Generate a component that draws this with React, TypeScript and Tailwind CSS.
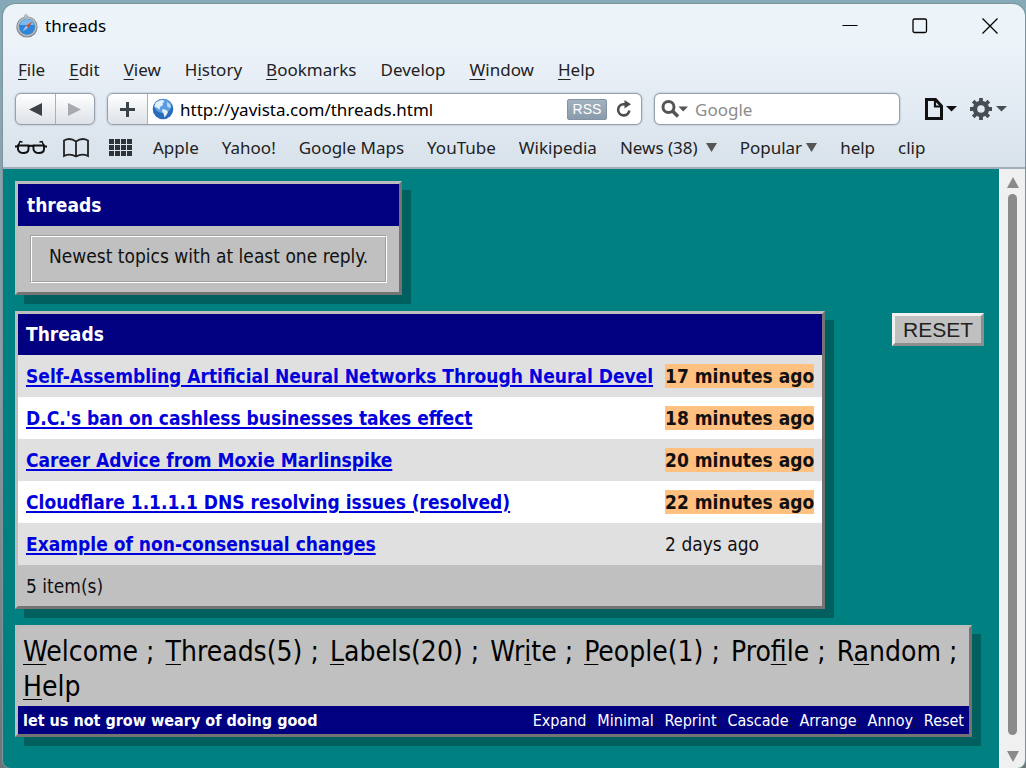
import React from "react";

type Parts = [string, string, string];

const menus: Parts[] = [
  ["", "F", "ile"],
  ["", "E", "dit"],
  ["", "V", "iew"],
  ["H", "i", "story"],
  ["", "B", "ookmarks"],
  ["Develop", "", ""],
  ["", "W", "indow"],
  ["", "H", "elp"],
];

const bookmarks = ["Apple", "Yahoo!", "Google Maps", "YouTube", "Wikipedia"];

const topics = [
  { title: "Self-Assembling Artificial Neural Networks Through Neural Devel", age: "17 minutes ago", fresh: true },
  { title: "D.C.'s ban on cashless businesses takes effect", age: "18 minutes ago", fresh: true },
  { title: "Career Advice from Moxie Marlinspike", age: "20 minutes ago", fresh: true },
  { title: "Cloudflare 1.1.1.1 DNS resolving issues (resolved)", age: "22 minutes ago", fresh: true },
  { title: "Example of non-consensual changes", age: "2 days ago", fresh: false },
];

const links: Parts[] = [
  ["", "W", "elcome"],
  ["", "T", "hreads(5)"],
  ["", "L", "abels(20)"],
  ["Wr", "i", "te"],
  ["", "P", "eople(1)"],
  ["Pro", "f", "ile"],
  ["R", "a", "ndom"],
  ["", "H", "elp"],
];

const actions = ["Expand", "Minimal", "Reprint", "Cascade", "Arrange", "Annoy", "Reset"];

function CompassIcon() {
  return (
    <svg width="24" height="24" viewBox="0 0 24 24" aria-hidden="true">
      <circle cx="11" cy="2.2" r="1.5" fill="none" stroke="#9a9fa3" />
      <circle cx="12" cy="13" r="10.6" fill="#7d8286" />
      <circle cx="12" cy="12.6" r="9.8" fill="#b4babe" />
      <circle cx="12" cy="12.8" r="8" fill="#2f86d6" />
      <path d="M5 11a7 6 0 0 1 14 0z" fill="#7db8ea" />
      <path d="M17.500 7.500l-4.500 6.300-2-2z" fill="#e2442c" />
      <path d="M7.500 17.500l3.500-5.700 2 2z" fill="#a9c9e6" />
    </svg>
  );
}

function GlobeIcon() {
  return (
    <svg width="22" height="22" viewBox="0 0 22 22" aria-hidden="true">
      <circle cx="11" cy="11" r="10.3" fill="#2a6cba" />
      <ellipse cx="11" cy="8" rx="8.500" ry="7" fill="#5b9de0" />
      <path d="M3 6c2-3 5-4 8-4l1.500 2-2 1 .5 2-3 2-.5 3-2-2-3-1z" fill="#e2f0fc" />
      <path d="M10.500 11l4 1 1.500 2-1.500 3-2 2.500-1-4-1.500-2z" fill="#e2f0fc" />
      <path d="M15 4l3 2 1 3-2 1-2-2z" fill="#b9d8f6" />
    </svg>
  );
}

function DownIcon() {
  return (
    <svg width="11" height="9" viewBox="0 0 11 9" aria-hidden="true">
      <path d="M0 0h11L5.500 9z" fill="#555" />
    </svg>
  );
}

function GlassesIcon() {
  return (
    <svg width="32" height="15" viewBox="0 0 32 15" fill="none" stroke="#111" aria-hidden="true">
      <path d="M0 6.500h3M29 6.500h3M13 6.500q3-1.500 6 0" strokeWidth="2" />
      <path d="M3 6L5 1.500l2.500.5M29 6l-2-4.500-2.500.5" strokeWidth="1.500" />
      <path d="M3 5.500h10.500v4q-.5 3.500-5 3.500T3 9.500zM18.500 5.500H29v4q-.5 3.500-5 3.500t-5.500-3.500z" strokeWidth="1.900" />
    </svg>
  );
}

function BookIcon() {
  return (
    <svg width="28" height="20" viewBox="0 0 28 20" fill="none" stroke="#222" strokeWidth="1.800" aria-hidden="true">
      <path d="M14 3.500Q8 -1 2 2.500V18q6-3 12 .5 6-3.500 12-.5V2.500Q20 -1 14 3.500zV18" />
    </svg>
  );
}

function GridIcon() {
  return (
    <svg width="23" height="17" viewBox="0 0 23 17" fill="#2e3338" aria-hidden="true">
      {[0, 6, 12].map((y) => [0, 6, 12, 18].map((x) => <rect key={`${x}-${y}`} x={x} y={y} width="5" height="5" />))}
    </svg>
  );
}

function Hot({ parts }: { parts: Parts }) {
  return (
    <>
      {parts[0]}
      {parts[1] && <span className="underline decoration-1 underline-offset-3">{parts[1]}</span>}
      {parts[2]}
    </>
  );
}

function TitleBar() {
  return (
    <header className="flex h-11 items-center bg-[#ecf4fa] pl-3">
      <CompassIcon />
      <h1 className="ml-1.5 text-[17px] text-black">threads</h1>
      <div className="ml-auto flex h-full text-black">
        <button aria-label="Minimize" className="grid w-[70px] place-items-center">
          <svg width="16" height="16" viewBox="0 0 16 16" fill="none" stroke="currentColor"><path d="M.5 7.500h15" /></svg>
        </button>
        <button aria-label="Maximize" className="grid w-[70px] place-items-center">
          <svg width="16" height="16" viewBox="0 0 16 16" fill="none" stroke="currentColor" strokeWidth="1.300"><rect x="1" y="1" width="13.500" height="13.500" rx="1.500" /></svg>
        </button>
        <button aria-label="Close" className="grid w-[70px] place-items-center">
          <svg width="16" height="16" viewBox="0 0 16 16" fill="none" stroke="currentColor" strokeWidth="1.300"><path d="M.5.5l15 15M15.500.5l-15 15" /></svg>
        </button>
      </div>
    </header>
  );
}

function Toolbar() {
  return (
    <div className="flex h-[34px] items-center pr-[18px] pl-3">
      <div className="flex h-8 w-20 shrink-0 overflow-hidden rounded-md border border-[#97a1ab] bg-linear-to-b from-white to-[#dde2e7] shadow-[0_0_2px_#97a1ab]">
        <button aria-label="Back" className="grid flex-1 place-items-center border-r border-[#a8b1ba]">
          <svg width="13" height="13" viewBox="0 0 13 13"><path d="M13 0v13L0 6.500z" fill="#3b4348" /></svg>
        </button>
        <button aria-label="Forward" className="grid flex-1 place-items-center">
          <svg width="13" height="13" viewBox="0 0 13 13"><path d="M0 0v13l13-6.500z" fill="#a7abaf" /></svg>
        </button>
      </div>
      <div className="ml-3 flex h-8 flex-1 items-center overflow-hidden rounded-md border border-[#97a1ab] bg-white shadow-[0_0_2px_#97a1ab]">
        <button aria-label="Add bookmark" className="grid h-full w-10 place-items-center border-r border-[#a8b1ba] bg-linear-to-b from-white to-[#dde2e7]">
          <svg width="15" height="15" viewBox="0 0 15 15"><path d="M7.500 0v15M0 7.500h15" stroke="#3b4348" strokeWidth="3" /></svg>
        </button>
        <span className="ml-1"><GlobeIcon /></span>
        <input aria-label="Address" defaultValue="http://yavista.com/threads.html" className="ml-1.5 min-w-0 flex-1 pt-0.5 text-[17px] text-black outline-none" />
        <button className="h-[21px] w-10 rounded-xs border border-[#8293a3] bg-linear-to-b from-[#a3b2c0] to-[#899bac] font-['Liberation_Sans',Arial,sans-serif] text-sm leading-4 text-white">RSS</button>
        <button aria-label="Reload" className="mx-2">
          <svg width="18" height="18" viewBox="0 0 18 18"><path d="M11.500 4.200H8.500a5.600 5.600 0 1 0 5.800 6.300" fill="none" stroke="#4c4c4c" strokeWidth="2.600" /><path d="M9.500 0l6.500 4.300-6.500 4.200z" fill="#4c4c4c" /></svg>
        </button>
      </div>
      <label className="ml-3 flex h-8 w-[246px] items-center overflow-hidden rounded-md border border-[#97a1ab] bg-white pl-1.5 shadow-[0_0_2px_#97a1ab]">
        <svg width="27" height="20" viewBox="0 0 27 20" aria-hidden="true"><circle cx="7.500" cy="8" r="5.500" fill="none" stroke="#555" strokeWidth="3" /><path d="M11.500 12l5.500 5.500" stroke="#555" strokeWidth="3.500" /><path d="M17.500 7.500H27L22.200 12.500z" fill="#555" /></svg>
        <input aria-label="Search" placeholder="Google" className="ml-[7px] min-w-0 flex-1 pt-0.5 text-[17px] outline-none placeholder:text-[#8c8c8c]" />
      </label>
      <button aria-label="Page menu" className="ml-6">
        <svg width="33" height="24" viewBox="0 0 33 24"><path d="M2.500 2.500h9L17.500 9v12.500h-15z" fill="none" stroke="#111" strokeWidth="3" /><path d="M11 2v7.500h7" fill="none" stroke="#111" strokeWidth="2.200" /><path d="M22 9h11l-5.500 5.500z" fill="#111" /></svg>
      </button>
      <button aria-label="Settings" className="ml-3">
        <svg width="38" height="24" viewBox="0 0 38 24">
          <g fill="none" stroke="#474d52">
            <circle cx="12" cy="12" r="6" strokeWidth="4.500" />
            <path d="M12 1v5M12 18v5M1 12h5M18 12h5M4.200 4.200L8 8M16 16l3.800 3.800M4.200 19.800L8 16M16 8l3.800-3.800" strokeWidth="3.800" />
          </g>
          <path d="M27 9h11l-5.500 5.500z" fill="#474d52" />
        </svg>
      </button>
    </div>
  );
}

function BookmarksBar() {
  return (
    <nav className="flex h-[41px] items-center gap-[23px] pt-0.5 pl-3 text-[17px] text-[#222]">
      <div className="flex w-[115px] items-center gap-[15px]">
        <button aria-label="Reading list"><GlassesIcon /></button>
        <button aria-label="Show bookmarks"><BookIcon /></button>
        <button aria-label="Top sites" className="ml-1"><GridIcon /></button>
      </div>
      {bookmarks.map((b) => <a key={b} href="#">{b}</a>)}
      <button className="flex items-center gap-2">News (38) <DownIcon /></button>
      <button className="flex items-center gap-1">Popular <DownIcon /></button>
      <a href="#">help</a>
      <a href="#">clip</a>
    </nav>
  );
}

const panel =
  "border-3 border-t-[#bdbdbd] border-r-[#747474] border-b-[#747474] border-l-[#bdbdbd] bg-[#c0c0c0] shadow-[9px_9px_0_#006060]";

function Intro() {
  return (
    <section className={`w-max ${panel}`}>
      <h2 className="bg-[#000080] px-[9px] text-[19px] leading-[42px] font-bold text-white">threads</h2>
      <div className="mx-3 my-[9px] border border-t-[#a0a0a0] border-r-white border-b-white border-l-[#a0a0a0]">
        <p className="border border-t-white border-r-[#a0a0a0] border-b-[#a0a0a0] border-l-white px-[17px] pt-1 pb-2.5 leading-[30px]">
          Newest topics with at least one reply.
        </p>
      </div>
    </section>
  );
}

function Threads() {
  return (
    <section className={panel}>
      <table>
        <thead>
          <tr className="h-[41px] bg-[#000080] text-left text-white">
            <th colSpan={2} className="px-2">Threads</th>
          </tr>
        </thead>
        <tbody>
          {topics.map((t) => (
            <tr key={t.title} className="h-[42px] odd:bg-[#e0e0e0] even:bg-white">
              <td className="pr-1 pl-2 font-bold">
                <a href="#" className="text-[#0000dd] underline decoration-2 underline-offset-2">{t.title}</a>
              </td>
              <td className="px-2">
                {t.fresh ? <span className="inline-block bg-[#ffc080] leading-6 font-bold">{t.age}</span> : t.age}
              </td>
            </tr>
          ))}
        </tbody>
        <tfoot>
          <tr className="h-[41px]">
            <td colSpan={2} className="px-2 pt-0.5">5 item(s)</td>
          </tr>
        </tfoot>
      </table>
    </section>
  );
}

function BottomMenu() {
  return (
    <section className={`mr-3 ${panel}`}>
      <nav className="flex flex-wrap gap-x-[11px] px-[5px] pt-1.5 pb-0.5 text-[28px] leading-[35px] text-black">
        {links.map((l, i) => (
          <span key={l.join("")} className="flex gap-2">
            <a href="#"><Hot parts={l} /></a>
            {i < links.length - 1 && <span>;</span>}
          </span>
        ))}
      </nav>
      <div className="flex h-7 items-center justify-between bg-[#000080] px-[5px] pt-0.5 text-base">
        <strong className="text-white">let us not grow weary of doing good</strong>
        <div className="flex">
          {actions.map((a, i) => (
            <span key={a} className="flex">
              <button className="text-white">{a}</button>
              {i < actions.length - 1 && <span className="mr-1.5 text-[#111]">;</span>}
            </span>
          ))}
        </div>
      </div>
    </section>
  );
}

function ScrollRail() {
  return (
    <div className="flex w-[26px] shrink-0 flex-col items-center gap-1.5 border-l border-white bg-[#f0f0f0] pt-2 pb-1.5" aria-hidden="true">
      <svg width="12" height="11" viewBox="0 0 12 11"><path d="M6 0l6 11H0z" fill="#8a8a8a" /></svg>
      <span className="w-[9px] flex-1 rounded-full bg-[#8a8a8a]" />
      <svg className="mt-2.5" width="12" height="11" viewBox="0 0 12 11"><path d="M0 0h12L6 11z" fill="#8a8a8a" /></svg>
    </div>
  );
}

export default function App() {
  return (
    <div className="flex min-h-screen flex-col bg-linear-to-b from-[#86a9b8] via-[#8b9ca4] to-[#6b7478] pt-1 pr-px pl-[3px] font-['Noto_Sans',sans-serif]">
      <div className="flex flex-1 flex-col overflow-hidden rounded-t-xl rounded-b-lg bg-[#008080] shadow-[0_0_0_1px_#7f959c]">
        <TitleBar />
        <div className="border-b-2 border-[#9fafb9] bg-linear-to-b from-[#ecf2fa] to-[#d8e2eb]">
          <nav className="flex h-11 items-center gap-6 px-[15px] text-[17px] text-[#222]">
            {menus.map((m) => <button key={m.join("")}><Hot parts={m} /></button>)}
          </nav>
          <Toolbar />
          <BookmarksBar />
        </div>
        <div className="flex flex-1 font-['DejaVu_Sans_Condensed','DejaVu_Sans',sans-serif] text-[19px] text-[#111]">
          <main className="flex min-w-0 flex-1 flex-col gap-4 pt-3 pr-[15px] pb-[30px] pl-3">
            <Intro />
            <div className="flex items-start justify-between">
              <Threads />
              <button className="mt-0.5 h-[33px] border-3 border-t-[#f0f0f0] border-r-[#8e8e8e] border-b-[#8e8e8e] border-l-[#f0f0f0] bg-[#c0c0c0] px-2 font-['Liberation_Sans',Arial,sans-serif] text-[21px] leading-6 text-[#222]">
                RESET
              </button>
            </div>
            <BottomMenu />
          </main>
          <ScrollRail />
        </div>
      </div>
    </div>
  );
}
